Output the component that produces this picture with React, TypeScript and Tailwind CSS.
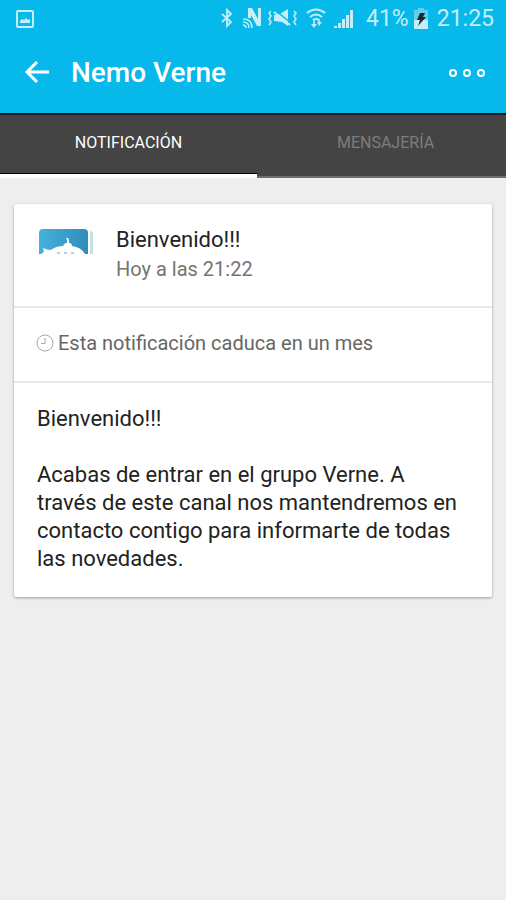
import { useState } from "react";

const tabs = ["NOTIFICACIÓN", "MENSAJERÍA"];

const App = () => {
  const [selectedTab, setSelectedTab] = useState(0);

  return (
    <div className="min-h-screen bg-[#eeeeee] font-['Roboto','Noto_Sans',sans-serif]">
      <header className="bg-[#07b8ea] pb-[5px] text-white">
        <StatusBar />
        <div className="flex h-[70px] items-center px-5">
          <button aria-label="Volver" className="flex w-[51px] pl-1">
            <svg
              viewBox="0 0 26 24"
              className="h-6 w-[26px] fill-none stroke-white stroke-3"
            >
              <path d="M25 11H4M13 1L3 11l10 10" />
            </svg>
          </button>
          <h1 className="grow text-[28px] leading-8 font-medium">Nemo Verne</h1>
          <button aria-label="Opciones">
            <svg
              viewBox="0 0 38 10"
              className="h-[10px] w-[38px] fill-none stroke-white stroke-2"
            >
              <circle cx="5" cy="5" r="3" />
              <circle cx="19" cy="5" r="3" />
              <circle cx="33" cy="5" r="3" />
            </svg>
          </button>
        </div>
      </header>
      <nav className="flex overflow-hidden border-t-2 border-[#10181c] bg-[#444444]">
        {tabs.map((tab, i) => (
          <Tab
            key={tab}
            title={tab}
            activated={selectedTab === i}
            onClick={() => setSelectedTab(i)}
          />
        ))}
      </nav>
      <main className="px-[14px] py-[26px]">
        <Notification />
      </main>
    </div>
  );
};

const Tab = ({
  title,
  activated,
  onClick,
}: {
  title: string;
  activated: boolean;
  onClick: () => void;
}) => {
  return (
    <button
      onClick={onClick}
      className={`flex h-[63px] w-[calc(50%+4px)] shrink-0 flex-col text-base ${
        activated ? "text-white" : "text-[#7d7d7d]"
      }`}
    >
      <span className="flex w-full grow items-center justify-center pb-0.5">
        {title}
      </span>
      <span
        className={`h-[5px] w-full ${
          activated
            ? "border-t border-black bg-white"
            : "border-b-2 border-[#6e6e6e]"
        }`}
      />
    </button>
  );
};

const Notification = () => {
  return (
    <article className="rounded-xs bg-white text-xl leading-7 text-[#222222] shadow-[0_1px_3px_rgba(0,0,0,0.35)]">
      <div className="flex h-[104px] gap-[22px] border-b-2 border-[#e8e8e8] px-6 pt-[22px]">
        <Submarine />
        <div className="space-y-px">
          <h2 className="text-[22px]">Bienvenido!!!</h2>
          <p className="text-[#747474]">Hoy a las 21:22</p>
        </div>
      </div>
      <div className="flex h-[75px] items-center gap-1 border-b-2 border-[#e8e8e8] px-[22px] pb-1 text-[#666666]">
        <svg
          viewBox="0 0 18 18"
          className="size-[18px] fill-none stroke-[#a8a8a8]"
        >
          <circle cx="9" cy="9" r="8" />
          <path d="M9 4v5.500H5" />
        </svg>
        <p>Esta notificación caduca en un mes</p>
      </div>
      <div className="space-y-7 px-[23px] pt-[22px] pb-6 text-[22px]">
        <p>Bienvenido!!!</p>
        <p>
          Acabas de entrar en el grupo Verne. A través de este canal nos
          mantendremos en contacto contigo para informarte de todas las
          novedades.
        </p>
      </div>
    </article>
  );
};

const Submarine = () => {
  return (
    <svg viewBox="0 0 56 30" className="h-[30px] w-14">
      <defs>
        <linearGradient id="sea" x1="0" y1="0" x2="1" y2="0">
          <stop offset="0" stopColor="#45b1da" />
          <stop offset="1" stopColor="#2f8db8" />
        </linearGradient>
      </defs>
      <path d="M52 5q3 0 3 3v20h-3z" fill="#c4e0e8" />
      <path d="M1 28V7q0-4 4-4h41q4 0 4 4v21z" fill="url(#sea)" />
      <path
        d="M3 28l3-2-1-4q4 2 8 2 5-4 12-4 1-3 4-3v-3l-1-2h2l1 2v3q3 0 3 3 9 1 13 8z"
        fill="#ffffff"
      />
      <path
        d="M19 27h3M26 27h3M33 27h3"
        stroke="#8accdf"
        strokeWidth="1.500"
      />
    </svg>
  );
};

const StatusBar = () => {
  return (
    <div className="flex h-[38px] items-center justify-between pr-3 pl-4 text-[#c5eefa]">
      <svg
        viewBox="0 0 18 18"
        className="size-[18px] fill-none stroke-current stroke-2"
      >
        <rect x="1" y="1" width="16" height="16" rx="1" />
        <path
          d="M4 13v-2l2-2 2 1 2-2 2 2 2-1v4z"
          className="fill-current stroke-none"
        />
      </svg>
      <div className="flex items-center text-[23px] leading-7">
        <svg viewBox="0 0 138 24" className="mr-3 h-6 w-[138px] fill-none">
          <g stroke="currentColor" strokeWidth="1.800">
            <path d="M6 7l9 8-4 4V3l4 4-9 8" />
            <path
              d="M55 4l-2 2 2 3-2 3 2 3-2 3M78 4l2 2-2 3 2 3-2 3 2 3"
              strokeWidth="1.500"
            />
            <path
              d="M27 18q3 0 3 3M27 15q6 0 6 6M27 12q9 0 9 9"
              strokeWidth="1.500"
            />
            <path
              d="M91 6q9-7 18 0M94 10q6-5 12 0M97 13q3-2 6 0"
              strokeWidth="2"
            />
            <path d="M98 13v6M103 12v5" strokeWidth="1.500" />
          </g>
          <g fill="currentColor">
            <path d="M32 1h4l6 11V1h3v18h-4l-6-11v3h-3z" />
            <path d="M58 8h4l10-6v17l-6-4-8-1z" />
            <path d="M95 17h6l-3 4zM101 15h5l-3 4z" />
            <path d="M118 19h3v2h-3zM122 16h3v5h-3zM126 12h3v9h-3zM130 8h3v13h-3zM134 3h3v18h-3z" />
          </g>
          <path d="M59 3l16 13" stroke="#07b8ea" strokeWidth="1.500" />
          <path d="M58 5l16 13" stroke="currentColor" strokeWidth="2" />
        </svg>
        <span>41%</span>
        <svg viewBox="0 0 16 22" className="mx-1 h-[22px] w-4">
          <path d="M5 0h6v2h4v19H1V2h4z" fill="#62cdec" />
          <path d="M1 12h14v9H1z" fill="currentColor" />
          <path d="M7 5h5l-2 4h3l-8 9 2-6H4z" fill="#152a32" />
        </svg>
        <span className="ml-1">21:25</span>
      </div>
    </div>
  );
};

export default App;
